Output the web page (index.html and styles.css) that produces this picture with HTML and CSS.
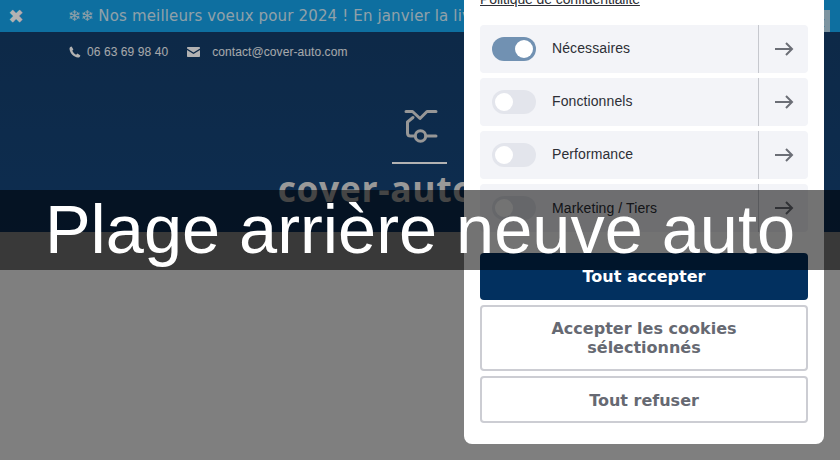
FILE: index.html
```html
<!DOCTYPE html>
<html lang="fr">
<head>
<meta charset="utf-8">
<title>Plage arrière neuve auto</title>
<link rel="stylesheet" href="styles.css">
</head>
<body>
<div class="page">
  <div class="topbar">
    <span class="close-x">✖</span>
    <span class="notice">❄❄ Nos meilleurs voeux pour 2024 ! En janvier la livraison est offerte</span>
    <span class="corner-btn">✖</span>
  </div>
  <header class="header">
    <div class="contact">
      <svg class="ic-phone" width="12" height="12" viewBox="0 0 12 12"><path d="M2.6.6 4.4 3.4 3.3 4.8C3.9 6.2 5.4 7.9 7.1 8.7L8.4 7.6 11.4 9.4C11.2 10.6 10.2 11.6 9 11.5 4.6 11 1 7.2.5 3 .4 1.900 1.400.800 2.600.6Z"/></svg>
      <span class="phone">06 63 69 98 40</span>
      <svg class="ic-mail" width="13" height="10" viewBox="0 0 13 10"><path d="M1 0H12C12.600 0 13 .4 13 1V1.500L6.500 5.500 0 1.500V1C0 .4.400 0 1 0ZM0 3 6.500 7 13 3V9C13 9.600 12.600 10 12 10H1C.4 10 0 9.600 0 9Z"/></svg>
      <span class="mail">contact@cover-auto.com</span>
    </div>
    <div class="brand">
      <svg class="logo" width="34" height="36" viewBox="0 0 34 36" fill="none"><path d="M2 2.500H8.500L16 9.500 23 2.500H32M9 8.500 3.500 13V24C3.500 26 4.500 27 6.500 27H11M22 27H32" /><circle cx="16.500" cy="27" r="5.200"/></svg>
      <div class="rule"></div>
      <div class="brand-name">cover-auto.com</div>
    </div>
  </header>
</div>
<div class="scrim"></div>
<aside class="modal">
  <a class="policy">Politique de confidentialité</a>
  <div class="rows">
    <div class="row"><span class="toggle on"><i></i></span><span class="label">Nécessaires</span><span class="go"><svg width="20" height="14" viewBox="0 0 20 14"><path d="M1 7H18M12 1 18 7 12 13"/></svg></span></div>
    <div class="row"><span class="toggle"><i></i></span><span class="label">Fonctionnels</span><span class="go"><svg width="20" height="14" viewBox="0 0 20 14"><path d="M1 7H18M12 1 18 7 12 13"/></svg></span></div>
    <div class="row"><span class="toggle"><i></i></span><span class="label">Performance</span><span class="go"><svg width="20" height="14" viewBox="0 0 20 14"><path d="M1 7H18M12 1 18 7 12 13"/></svg></span></div>
    <div class="row"><span class="toggle"><i></i></span><span class="label">Marketing / Tiers</span><span class="go"><svg width="20" height="14" viewBox="0 0 20 14"><path d="M1 7H18M12 1 18 7 12 13"/></svg></span></div>
  </div>
  <div class="actions">
    <button class="btn primary">Tout accepter</button>
    <button class="btn ghost">Accepter les cookies sélectionnés</button>
    <button class="btn ghost">Tout refuser</button>
  </div>
</aside>
<div class="band"><h1>Plage arrière neuve auto</h1></div>
</body>
</html>
```
FILE: styles.css
```css
* { box-sizing: border-box; }
html, body { margin: 0; height: 460px; overflow: hidden; background: #b7b7b7; }
body { position: relative; width: 840px; font-family: "Liberation Sans", Arial, sans-serif; }
.page { display: flex; flex-direction: column; }
.topbar { height: 32px; background: #15a0e6; display: flex; align-items: center; position: relative; white-space: nowrap; overflow: hidden; }
.close-x { width: 68px; padding-left: 8px; color: #fff; font: 19px "DejaVu Sans", sans-serif; flex: none; }
.notice { color: #cfe6f2; font: 15px "DejaVu Sans", sans-serif; letter-spacing: .15px; }
.corner-btn { position: absolute; left: 806px; top: 10px; width: 24px; height: 26px; background: #b3d4e6; color: #333; font: 19px/26px "DejaVu Sans", sans-serif; text-align: center; }
.header { height: 200px; background: linear-gradient(#143c67, #134073); display: flex; flex-direction: column; align-items: center; position: relative; overflow: hidden; }
.contact { align-self: flex-start; margin: 13px 0 0 69px; display: flex; align-items: center; height: 14px; color: #eef1f5; font-size: 12px; letter-spacing: .08px; }
.contact svg { fill: #fff; flex: none; }
.phone { margin-left: 6px; }
.ic-mail { margin-left: 19px; }
.mail { margin-left: 12px; }
.brand { display: flex; flex-direction: column; align-items: center; margin-top: 50px; }
.logo { stroke: #d8d8d8; stroke-width: 3; stroke-linecap: round; stroke-linejoin: round; margin-left: 2px; }
.rule { width: 55px; height: 2px; background: #ffffff; margin-top: 17px; }
.brand-name { margin-top: 2px; color: #dcdcdc; font: 700 35.5px/44px "Open Sans", sans-serif; white-space: nowrap; letter-spacing: .6px; }
.scrim { position: absolute; inset: 0; background: rgba(0, 0, 0, .3); }
.modal { position: absolute; right: 16px; bottom: 16px; width: 360px; height: 460px; padding: 0 16px 21px; background: #fff; border-radius: 8px; display: flex; flex-direction: column; justify-content: flex-end; }
.policy { display: block; height: 25px; font-size: 14px; letter-spacing: -.1px; line-height: 15px; color: #2d2f36; text-decoration: underline; position: relative; top: -8px; }
.rows { display: flex; flex-direction: column; gap: 5px; margin-bottom: 21px; }
.row { height: 48px; background: #f3f4f8; border-radius: 4px; display: flex; align-items: center; padding-left: 12px; }
.toggle { width: 44px; height: 24px; border-radius: 12px; background: #e3e5ec; display: flex; align-items: center; padding: 3px; flex: none; }
.toggle i { width: 18px; height: 18px; border-radius: 50%; background: #fff; display: block; }
.toggle.on { background: #7191b2; justify-content: flex-end; }
.label { margin: 0 0 2px 16px; flex: 1; font-size: 14px; letter-spacing: .1px; color: #2d2f36; }
.row:last-child .label { margin-bottom: 0; }
.go { width: 50px; height: 48px; border-left: 1px solid #c6c8ce; display: flex; align-items: center; justify-content: center; flex: none; }
.go svg { fill: none; stroke: #6b6e76; stroke-width: 2; }
.actions { display: flex; flex-direction: column; gap: 5px; }
.btn { width: 100%; font: 700 16px/19px "DejaVu Sans", sans-serif; border-radius: 4px; padding: 12px 16px; text-align: center; }
.primary { height: 47px; background: #02305f; color: #fff; border: 0; }
.ghost { background: #fff; color: #666972; border: 2px solid #cccdd3; padding: 12px 16px; }
.ghost:nth-child(2) { height: 66px; }
.ghost:nth-child(3) { height: 47px; padding-top: 13px; padding-bottom: 11px; }
.band { position: absolute; left: 0; right: 0; top: 190px; height: 80px; background: rgba(0, 0, 0, .55); display: flex; align-items: center; justify-content: center; }
.band h1 { margin: 0; color: #fff; font-weight: 400; font-size: 68.5px; line-height: 80px; white-space: nowrap; }
```
